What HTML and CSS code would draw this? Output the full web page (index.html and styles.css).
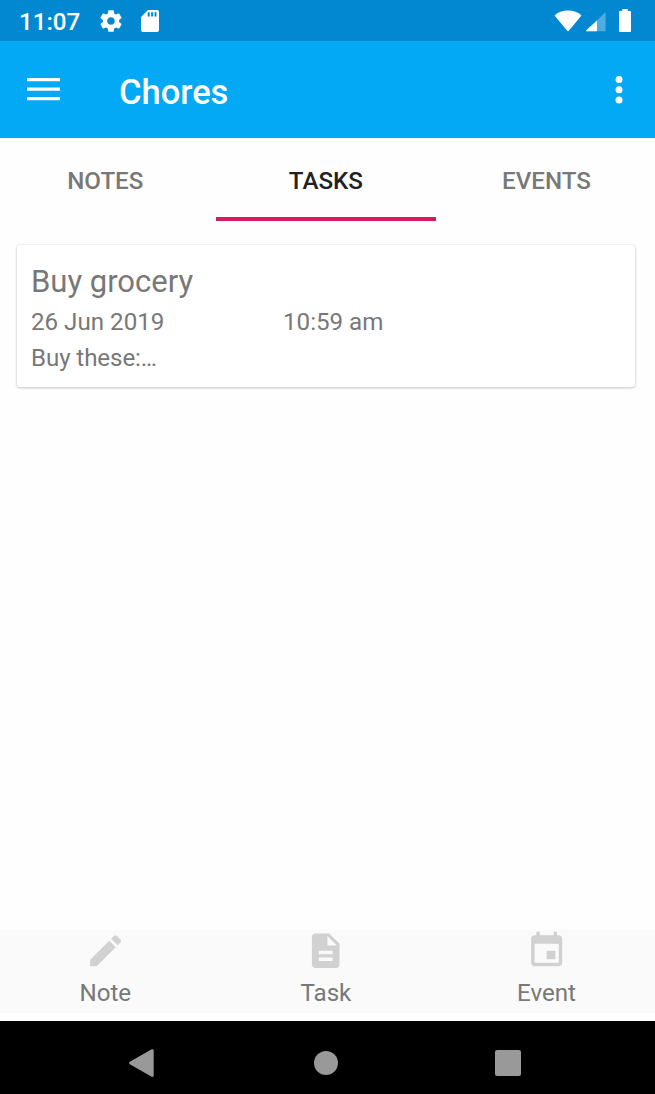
FILE: index.html
```html
<!DOCTYPE html>
<html lang="en">
<head>
<meta charset="utf-8">
<title>Chores</title>
<link rel="stylesheet" href="styles.css">
</head>
<body>
<div class="status">
  <span class="clock">11:07</span>
  <svg class="gear" width="26" height="26" viewBox="0 0 24 24" fill="#fff"><path d="M19.43 12.98c.04-.32.07-.64.07-.98s-.03-.66-.07-.98l2.11-1.65c.19-.15.24-.42.12-.64l-2-3.46c-.12-.22-.39-.3-.61-.22l-2.49 1c-.52-.4-1.08-.73-1.69-.98l-.38-2.65C14.46 2.18 14.25 2 14 2h-4c-.25 0-.46.18-.49.42l-.38 2.65c-.61.25-1.17.59-1.69.98l-2.49-1c-.23-.09-.49 0-.61.22l-2 3.46c-.13.22-.07.49.12.64l2.11 1.65c-.04.32-.07.65-.07.98s.03.66.07.98l-2.11 1.65c-.19.15-.24.42-.12.64l2 3.46c.12.22.39.3.61.22l2.49-1c.52.4 1.08.73 1.69.98l.38 2.65c.03.24.24.42.49.42h4c.25 0 .46-.18.49-.42l.38-2.65c.61-.25 1.17-.59 1.69-.98l2.49 1c.23.09.49 0 .61-.22l2-3.46c.12-.22.07-.49-.12-.64l-2.11-1.65zM12 15.5c-1.93 0-3.5-1.57-3.5-3.5s1.57-3.5 3.5-3.5 3.500 1.570 3.500 3.500-1.570 3.500-3.500 3.500z"/></svg>
  <svg class="sd" width="18" height="22" viewBox="0 0 18 22"><path fill="#fff" d="M7 0H16q2 0 2 2V20q0 2-2 2H2q-2 0-2-2V7z"/><path fill="#0288d1" d="M6.700 2.300h2v4.200h-2zM10.100 2.300h2v4.200h-2zM13.500 2.300h2v4.200h-2z"/></svg>
  <span class="spacer"></span>
  <svg class="wifi" width="28" height="22" viewBox="0 0 28 22"><path fill="#fff" d="M.5 5.400Q6 .4 14 .4T27.500 5.400L15 20.600q-1 1.100-2 0z"/></svg>
  <svg class="signal" width="20" height="20" viewBox="0 0 20 20"><path fill="#fff" fill-opacity=".3" d="M19.600 0V19.200H0z"/><path fill="#fff" d="M11 8.500v10.700H.5q-.8-.5 0-1.200z"/></svg>
  <svg class="battery" width="12" height="23" viewBox="0 0 12 23"><path fill="#fff" d="M3.200 0H8.800V2H11q1 0 1 1V22q0 1-1 1H1q-1 0-1-1V3q0-1 1-1H3.200z"/></svg>
</div>
<header class="appbar">
  <svg class="menu" width="33" height="23" viewBox="0 0 33 23" fill="#fff"><path d="M0 0h33v3.200H0zM0 9.500h33v3.200H0zM0 19h33v3.200H0z"/></svg>
  <h1 class="title">Chores</h1>
  <svg class="more" width="8" height="28" viewBox="0 0 8 28" fill="#fff"><circle cx="4" cy="3.400" r="3.500"/><circle cx="4" cy="13.700" r="3.500"/><circle cx="4" cy="24.100" r="3.500"/></svg>
</header>
<nav class="tabs">
  <div class="tab">NOTES</div>
  <div class="tab active">TASKS</div>
  <div class="tab">EVENTS</div>
</nav>
<main class="content">
  <article class="card">
    <h2 class="card-title">Buy grocery</h2>
    <div class="card-when"><span>26 Jun 2019</span><span>10:59 am</span></div>
    <p class="card-text">Buy these:…</p>
  </article>
</main>
<footer class="actions">
  <div class="action">
    <svg class="icon" width="41.400" height="41.400" viewBox="0 0 24 24"><path d="M3 17.250V21h3.750L17.810 9.940l-3.750-3.750L3 17.250zM20.710 7.040c.39-.39.39-1.020 0-1.410l-2.340-2.340c-.39-.39-1.020-.39-1.410 0l-1.830 1.830 3.750 3.750 1.830-1.830z"/></svg>
    <span class="label">Note</span>
  </div>
  <div class="action">
    <svg class="icon" width="41.400" height="41.400" viewBox="0 0 24 24"><path d="M14 2H6c-1.100 0-1.990.9-1.990 2L4 20c0 1.100.89 2 1.990 2H18c1.100 0 2-.9 2-2V8l-6-6zm2 16H8v-2h8v2zm0-4H8v-2h8v2zm-3-5V3.500L18.500 9H13z"/></svg>
    <span class="label">Task</span>
  </div>
  <div class="action">
    <svg class="icon" width="41.400" height="41.400" viewBox="0 0 24 24"><path d="M17 12h-5v5h5v-5zM16 1v2H8V1H6v2H5c-1.110 0-1.990.9-1.990 2L3 19c0 1.100.89 2 2 2h14c1.100 0 2-.9 2-2V5c0-1.100-.9-2-2-2h-1V1h-2zm3 18H5V8h14v11z"/></svg>
    <span class="label">Event</span>
  </div>
</footer>
<div class="navbar">
  <svg width="25" height="28" viewBox="0 0 25 28" fill="#999"><path d="M.8 12.800 22.700.3Q24.700-.3 24.700 1.500V26.500Q24.700 28.300 22.700 27.700L.8 15.200Q-.7 14 .8 12.800z"/></svg>
  <svg class="home" width="24" height="24" viewBox="0 0 24 24" fill="#999"><circle cx="12" cy="12" r="12"/></svg>
  <svg width="26" height="26" viewBox="0 0 26 26" fill="#999"><rect width="26" height="26" rx="2"/></svg>
</div>
</body>
</html>
```
FILE: styles.css
```css
* { box-sizing: border-box; }
body {
  margin: 0;
  height: 1094px;
  display: flex;
  flex-direction: column;
  overflow: hidden;
  background: #fefefe;
  color: #787878;
  font-family: Roboto, sans-serif;
  font-size: 24.150px;
}
svg { display: block; flex: none; }
h1, h2, p { margin: 0; }

.status {
  height: 41px;
  flex: none;
  display: flex;
  align-items: flex-start;
  padding: 0 24px 0 19px;
  background: #0288d1;
  color: #fff;
}
.clock { width: 79px; line-height: 44px; font-weight: 500; }
.gear { margin-top: 8px; }
.sd { margin: 10px 0 0 17px; }
.spacer { flex: 1; }
.wifi { margin-top: 10px; }
.signal { margin: 12px 0 0 4px; }
.battery { margin: 9px 0 0 13px; }

.appbar {
  height: 97px;
  flex: none;
  display: flex;
  align-items: center;
  padding: 0 32px 0 27px;
  background: #03a9f4;
  color: #fff;
}
.title {
  flex: 1;
  margin-left: 59px;
  padding-top: 4px;
  font-size: 34.500px;
  font-weight: 500;
  line-height: 40px;
}

.tabs, .actions {
  display: grid;
  grid-template-columns: repeat(3, 220.600px);
  flex: none;
  margin-left: -5px;
}
.tabs { height: 83px; }
.tab {
  height: 83px;
  padding-top: 1px;
  border-bottom: 4px solid transparent;
  line-height: 84px;
  text-align: center;
  font-weight: 500;
}
.active { color: #212121; border-color: #d81b60; }

.content { flex: 1; padding: 24px 20px 0 17px; }
.card {
  height: 142px;
  padding: 16px 14px 0;
  border-radius: 3px;
  background: #fff;
  box-shadow: 0 1px 3px rgba(0, 0, 0, .2), 0 0 2px rgba(0, 0, 0, .12);
}
.card-title { font-size: 31px; font-weight: 400; line-height: 42px; }
.card-when { display: grid; grid-template-columns: 252px 1fr; line-height: 38px; }
.card-text { line-height: 35px; letter-spacing: -.1px; }

.actions { height: 83px; margin-bottom: 8px; width: 662px; background: #fafafa; }
.action { display: flex; flex-direction: column; align-items: center; }
.icon { fill: #d1d1d1; }
.label { line-height: 44px; }

.navbar {
  height: 73px;
  flex: none;
  display: flex;
  justify-content: space-between;
  align-items: center;
  padding: 10px 134px 0 129px;
  background: #000;
}
.home { margin-left: 2px; }
```
